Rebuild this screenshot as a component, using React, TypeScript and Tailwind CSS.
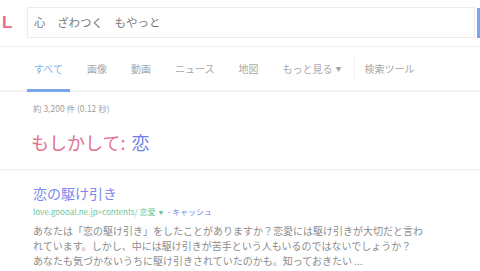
import React from "react";

const tabs = ["すべて", "画像", "動画", "ニュース", "地図"];

export default function App() {
  return (
    <div className="w-[480px] h-[271px] overflow-hidden bg-white font-['Noto_Sans_CJK_JP','Noto_Sans',sans-serif]">
      {/* header */}
      <div className="h-[47px] border-b border-[#f1f1f1] flex items-start pt-[7px]">
        <div className="w-[27px] h-[31px] flex items-center pl-[2px] text-[17px] font-bold text-[#ea6a8c] leading-none font-['Liberation_Sans',sans-serif]">
          L
        </div>
        <div className="flex-1 h-[31px] border border-[#ececec] flex items-center pl-[6px] text-[11.5px] text-[#7a7a7a]">
          心　ざわつく　もやっと
        </div>
        <div className="w-[3px] h-[30px] ml-[2px] mt-[1px] bg-[#7aa6ee]" />
      </div>

      {/* tabs */}
      <div className="h-[45px] border-b-2 border-[#f3f3f3] flex items-stretch pl-[27px] gap-[10px] text-[10px] text-[#a8a8a8]">
        {tabs.map((t, i) => (
          <div
            key={t}
            className={
              "px-[7px] flex items-center border-b-[3px] -mb-[2px] " +
              (i === 0 ? "border-[#7aa6ee] text-[#86aeec]" : "border-transparent")
            }
          >
            {t}
          </div>
        ))}
        <div className="px-[7px] flex items-center border-b-[3px] border-transparent -mb-[2px]">
          もっと見る
          <span className="ml-[3px] text-[6px]">▼</span>
        </div>
        <div className="flex items-center -ml-[4px]">
          <div className="w-px h-[22px] bg-[#f0f0f0]" />
        </div>
        <div className="flex items-center -ml-[1px]">検索ツール</div>
      </div>

      {/* results */}
      <div className="pl-[33px]">
        <div className="pt-[9px] text-[8.5px] text-[#a0a0a0] leading-[14px]">約 3,200 件 (0.12 秒)</div>
        <div className="pt-[14px] text-[18px] leading-[26px] -ml-[2px] text-[#e2708f]">
          もしかして:<span className="ml-[6px] text-[#6b7fe2]">恋</span>
        </div>
      </div>
      <div className="mt-[14px] border-t-2 border-[#f5f5f5]" />

      <div className="pl-[33px]">
        <div className="pt-[12px] text-[14px] leading-[20px] text-[#7c88ea]">恋の駆け引き</div>
        <div className="mt-[3px] text-[8px] leading-[12px] text-[#6cc597] flex items-center">
          love.goooal.ne.jp&gt;contents/ 恋愛
          <span className="ml-[3px] text-[5px]">▼</span>
          <span className="ml-[4px] text-[#7a86e6]">- キャッシュ</span>
        </div>
        <div className="mt-[5px] text-[10px] leading-[15px] text-[#8c8c8c]">
          <div>あなたは「恋の駆け引き」をしたことがありますか？恋愛には駆け引きが大切だと言わ</div>
          <div>れています。しかし、中には駆け引きが苦手という人もいるのではないでしょうか？</div>
          <div>あなたも気づかないうちに駆け引きされていたのかも。知っておきたい ...</div>
        </div>
      </div>
    </div>
  );
}
